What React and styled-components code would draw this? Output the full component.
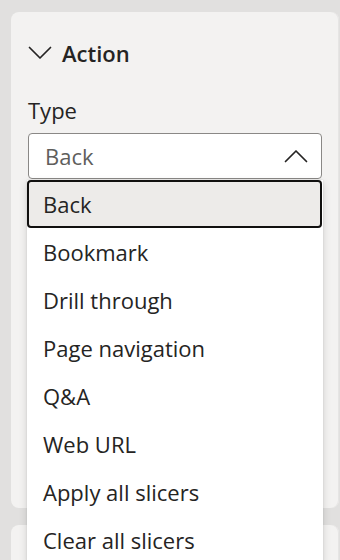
import React from 'react'
import styled, { createGlobalStyle } from 'styled-components'

const Global = createGlobalStyle`
    html, body {
        margin: 0;
        padding: 0;
        background: #e1e0df;
        font-family: 'Open Sans', 'Noto Sans', sans-serif;
        overflow: hidden;
    }
`

const Page = styled.div`
    width: 340px;
    height: 560px;
    padding: 12px 1px 0 11px;
    box-sizing: border-box;
    display: flex;
    flex-direction: column;
    gap: 17px;
`

const Card = styled.div`
    position: relative;
    background: #f3f2f1;
    border-radius: 8px;
    height: ${(p) => p.h}px;
    flex-shrink: 0;
    box-shadow: inset -1px 0 0 #e6e5e4;
`

const Header = styled.div`
    display: flex;
    align-items: center;
    gap: 10px;
    padding: 26px 0 0 17px;
    height: 30px;
`

const HeaderTitle = styled.div`
    font-size: 22px;
    font-weight: 600;
    color: #252423;
`

const Field = styled.div`
    padding: 27px 17px 0 17px;
    display: flex;
    flex-direction: column;
`

const Label = styled.div`
    font-size: 22px;
    color: #252423;
    height: 30px;
    line-height: 30px;
    margin-bottom: 8px;
`

const Select = styled.div`
    width: 294px;
    height: 46px;
    box-sizing: border-box;
    border: 1px solid #8a8886;
    border-radius: 4px;
    background: #fff;
    display: flex;
    align-items: center;
    justify-content: space-between;
    padding: 0 13px 0 16px;
    color: #605e5c;
    font-size: 22px;
`

const Menu = styled.div`
    position: absolute;
    z-index: 5;
    left: 16px;
    top: 168px;
    width: 296px;
    background: #fff;
    box-shadow: 0 3px 8px rgba(0, 0, 0, 0.14), 0 0 2px rgba(0, 0, 0, 0.1);
    display: flex;
    flex-direction: column;
`

const Item = styled.div`
    height: 48px;
    flex-shrink: 0;
    box-sizing: border-box;
    display: flex;
    align-items: center;
    padding-left: 14px;
    font-size: 22px;
    color: #252423;
    border-radius: 4px;
    border: 2px solid ${(p) => (p.selected ? '#11100f' : 'transparent')};
    background: ${(p) => (p.selected ? '#edebe9' : '#fff')};
    width: ${(p) => (p.selected ? '295px' : 'auto')};
`

const items = [
    'Back',
    'Bookmark',
    'Drill through',
    'Page navigation',
    'Q&A',
    'Web URL',
    'Apply all slicers',
    'Clear all slicers',
]

const Chevron = ({ up }) => (
    <svg width="24" height="14" viewBox="0 0 24 14">
        <path
            d={up ? 'M1.5 12.5 L12 2 L22.5 12.5' : 'M1.5 1.5 L12 12 L22.5 1.5'}
            fill="none"
            stroke="#252423"
            strokeWidth="1.7"
            strokeLinecap="round"
            strokeLinejoin="round"
        />
    </svg>
)

const App = () => {
    return (
        <>
            <Global />
            <Page>
                <Card h={496}>
                    <Header>
                        <Chevron />
                        <HeaderTitle>Action</HeaderTitle>
                    </Header>
                    <Field>
                        <Label>Type</Label>
                        <Select>
                            <span>Back</span>
                            <Chevron up />
                        </Select>
                    </Field>
                    <Menu>
                        {items.map((it, i) => (
                            <Item key={it} selected={i === 0}>
                                {it}
                            </Item>
                        ))}
                    </Menu>
                </Card>
                <Card h={60} />
            </Page>
        </>
    )
}

export default App
